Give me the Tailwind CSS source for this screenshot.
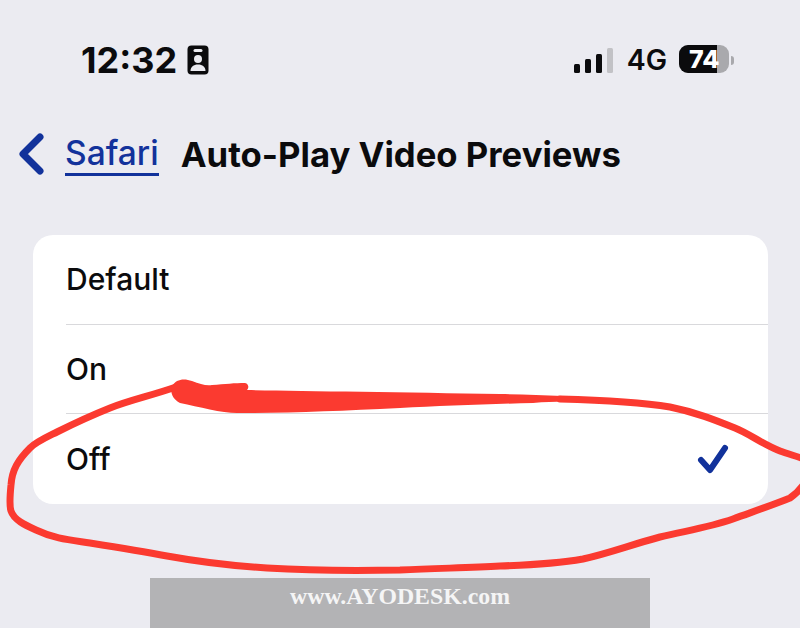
<!DOCTYPE html>
<html>
<head>
<meta charset="utf-8">
<script src="https://cdn.jsdelivr.net/npm/@tailwindcss/browser@4"></script>
</head>
<body class="m-0">
<div class="relative w-[800px] h-[628px] overflow-hidden bg-[#ebebf1] font-['Inter','Liberation_Sans',sans-serif] text-[#0b0b0d]">
  <!-- status bar -->
  <div class="flex items-center justify-between h-[40px] mt-[40px] pl-[81px] pr-[66px]">
    <div class="flex items-center gap-[10px]">
      <span class="text-[36px] leading-none font-bold">12:32</span>
      <svg width="22" height="30" viewBox="0 0 22 30"><rect x="0.5" y="0.5" width="21" height="29" rx="4" fill="#0b0b0d"/><rect x="6.500" y="4" width="9" height="3" rx="1.500" fill="#ebebf1"/><circle cx="11" cy="14" r="4" fill="#ebebf1"/><path d="M3.500 26c0-4 3-6.500 7.500-6.500S18.500 22 18.500 26z" fill="#ebebf1"/></svg>
    </div>
    <div class="flex items-center">
      <svg width="40" height="25" viewBox="0 0 40 25"><rect x="0" y="16" width="6" height="9" rx="1.500" fill="#0b0b0d"/><rect x="11" y="11" width="6" height="14" rx="1.500" fill="#0b0b0d"/><rect x="22" y="6" width="6" height="19" rx="1.500" fill="#0b0b0d"/><rect x="33" y="0" width="6" height="25" rx="1.500" fill="#c2c2c6"/></svg>
      <span class="ml-[13px] text-[28.500px] leading-none font-semibold">4G</span>
      <div class="relative ml-[12px] -mt-[2px] flex items-center w-[50px] h-[28px] rounded-[9px] overflow-hidden bg-[#a9a9ad]">
        <div class="w-[38px] h-full bg-[#0b0b0d]"></div>
        <span class="absolute left-[10px] top-0 text-[25px] leading-[28px] font-extrabold text-white">74</span>
      </div>
      <div class="ml-[2px] w-[3px] h-[9px] rounded-r-[3px] bg-[#a9a9ad]"></div>
    </div>
  </div>
  <!-- nav -->
  <div class="flex items-center h-[50px] mt-[49px] pl-[18px]">
    <svg width="26" height="42" viewBox="0 0 26 42" fill="none"><path d="M22 4 5 21l17 17" stroke="#12329b" stroke-width="7" stroke-linecap="round" stroke-linejoin="round"/></svg>
    <span class="ml-[21px] text-[33.500px] leading-[40px] font-medium text-[#12329b] border-b-[3px] border-[#12329b]">Safari</span>
    <span class="ml-[22px] text-[34.700px] leading-[40px] font-bold">Auto-Play Video Previews</span>
  </div>
  <!-- list card -->
  <div class="ml-[33px] mt-[56px] w-[735px] h-[269px] rounded-[20px] bg-white text-[30px] font-medium">
    <div class="flex items-center h-[89px] pl-[33px]">Default</div>
    <div class="ml-[33px] h-px bg-[#d9d9dc]"></div>
    <div class="flex items-center h-[88px] pl-[33px]">On</div>
    <div class="ml-[33px] h-px bg-[#d9d9dc]"></div>
    <div class="flex items-center justify-between h-[90px] pl-[33px] pr-[39px]">
      <span>Off</span>
      <svg width="32" height="30" viewBox="0 0 32 30" fill="none"><path d="M4 16 13 26 28 4" stroke="#12329b" stroke-width="6" stroke-linecap="round" stroke-linejoin="round"/></svg>
    </div>
  </div>
  <!-- hand-drawn annotation -->
  <svg class="absolute inset-0" width="800" height="628" viewBox="0 0 800 628" fill="none">
    <path d="M176 387C150 396 130 400 110 408C90 416 75 423 57 432C45 438 36 442 30 448C18 460 12 470 11 485C10 495 9 505 11 511C14 520 25 525 36 530C55 539 70 540 90 543C115 547 140 551 167 556C200 562 235 566 267 568C300 570 350 571 400 570C440 568 470 568 500 566C530 565 560 563 583 559C610 553 630 545 660 537C690 530 710 527 733 519C755 511 770 506 790 498C796 494 800 490 804 484" stroke="#fb3a30" stroke-width="7" stroke-linecap="round" stroke-linejoin="round"/>
    <path d="M560 399C600 400 640 402 670 407C695 412 715 420 735 428C750 434 762 444 780 451C788 454 796 456 804 459" stroke="#fb3a30" stroke-width="7" stroke-linecap="round" stroke-linejoin="round"/>
    <path d="M172 386C176 379 184 378 192 381C200 384 206 386 212 385C225 384 235 383 245 383C249 384 249 388 247 390C300 391 400 392 500 394C540 395 580 396 610 400L610 403C580 402 560 401 533 403C490 404 440 406 400 408C340 411 290 413 240 413C225 414 200 407 180 403C172 399 170 392 172 386Z" fill="#fb3a30"/>
  </svg>
  <!-- watermark -->
  <div class="absolute left-[150px] top-[578px] w-[500px] h-[50px] bg-[#b3b3b5] text-center text-[23.800px] leading-[36px] font-bold text-[#f5f5f5] font-['Liberation_Serif',serif]">www.AYODESK.com</div>
</div>
</body>
</html>
